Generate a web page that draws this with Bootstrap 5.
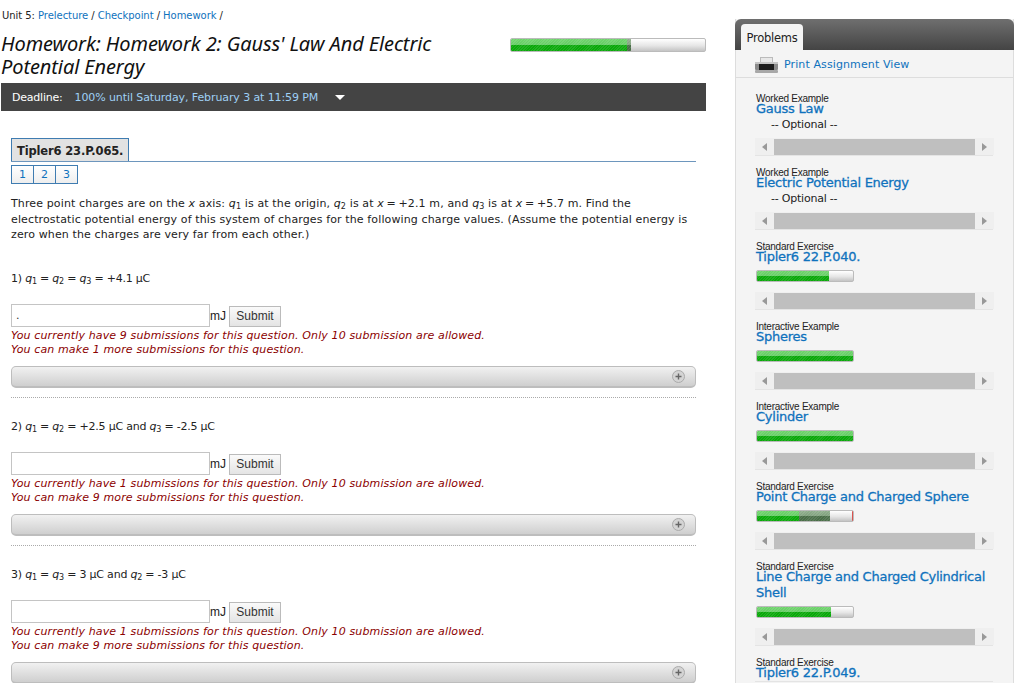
<!DOCTYPE html>
<html lang="en">
<head>
  <meta charset="UTF-8" />
  <meta name="viewport" content="width=device-width, initial-scale=1.0" />
  <title>Homework 2</title>
  <link href="https://cdn.jsdelivr.net/npm/bootstrap@5.3.3/dist/css/bootstrap.min.css" rel="stylesheet">
  <style>
    html, body { height: 683px; overflow: hidden; }
    body { font-family: "DejaVu Sans", sans-serif; font-size: 11px; line-height: 15.5px; color: #222; background: #fff; letter-spacing: -.02em; }
    a { color: #0f72bd; text-decoration: none; }
    .page-wrap { width: 1024px; }
    .main-col { width: 706px; flex: none; }
    .crumbs { font-size: 10px; line-height: 14px; padding: 9px 0 0 2px; letter-spacing: -.05px; }
    .head-row { padding-top: 10px; }
    .hw-title { width: 460px; font-family: "Noto Sans", sans-serif; font-size: 20px; line-height: 23px; font-style: italic; font-weight: 400; margin: -1px 0 0 1px; color: #111; letter-spacing: -.1px; }
    .meter { height: 14px; border: 1px solid #bbb; border-radius: 2px; background: linear-gradient(#fff, #e6e6e6 55%, #c4c4c4); overflow: hidden; }
    .meter-big { width: 196px; margin: 5px 0 0 0; }
    .meter-small { width: 98px; margin-left: 1px; height: 12px; position: relative; }
    .fill, .fill-dark { height: 100%; float: left; }
    .fill { background: repeating-linear-gradient(135deg, rgba(255,255,255,.1) 0 1px, transparent 1px 2px), linear-gradient(#6fd46c 0, #66cc66 50%, #0aa80a 50%, #0aa80a 100%); }
    .fill-dark { background: repeating-linear-gradient(135deg, rgba(255,255,255,.1) 0 1px, transparent 1px 2px), linear-gradient(#8fae8c 0, #80a07d 50%, #4a6e48 50%, #4a6e48 100%); }
    .red-tick { position: absolute; right: 0; top: 0; bottom: 0; width: 1px; background: #d9534f; }
    .deadline { background: #444; color: #fff; height: 28px; margin: 5px 0 0 1px; padding: 1px 0 0 11px; gap: 12px; }
    .deadline a { color: #9fd0f5; letter-spacing: -.1px; }
    .caret-down { width: 0; height: 0; border-left: 5px solid transparent; border-right: 5px solid transparent; border-top: 5px solid #fff; margin-left: 5px; }
    .body-wrap { padding: 27px 10px 0 11px; }
    .prob-tab { display: inline-block; height: 23px; padding: 0 5px; border: 1px solid #3f7cb1; border-bottom: 0; background: #e2e2e2; color: #222; font-size: 11.5px; font-weight: 700; line-height: 24px; vertical-align: bottom; letter-spacing: -.15px; }
    .prob-rule { border-bottom: 1px solid #6d96bd; height: 24px; }
    .part-tabs { margin-top: 3px; margin-bottom: 12px; }
    .part-tabs a { width: 23px; height: 19px; text-align: center; line-height: 17px; border: 1px solid #3f7cb1; margin-right: -1px; background: linear-gradient(#fff, #eee); }
    .qtext { margin: 0; letter-spacing: .126px; }
    .eq-tight { margin: 0 -1px; }
    sub { font-size: 8px; bottom: -.3em; }
    .question { padding-top: 21px; }
    .question-first { padding-top: 28px; }
    .q-label { margin: 0 0 18px; line-height: 15px; }
    .q-line { height: 23px; }
    .answer-box { width: 199px; height: 23px; border: 1px solid #c4c4c4; background: #fff; padding: 0 4px; font-size: 11px; color: #333; line-height: 21px; }
    .unit { font-family: "Liberation Sans", sans-serif; font-size: 12px; margin-top: 5px; letter-spacing: 0; }
    .sub-btn { font-family: "Liberation Sans", sans-serif; font-size: 12px; letter-spacing: 0; color: #333; height: 21px; width: 52px; margin: 2px 0 0 3px; padding: 0; border: 1px solid #bbb; border-radius: 0; background: linear-gradient(#fafafa, #e4e4e4); line-height: 19px; }
    .warn { color: #8b0000; font-style: italic; line-height: 14px; margin-top: 2px; letter-spacing: .13px; }
    .hint-bar { height: 22px; margin-top: 9px; border: 1px solid #bdbdbd; border-bottom-width: 2px; border-radius: 5px; background: linear-gradient(#f1f1f1, #cfcfcf); padding-right: 10px; }
    .hint-plus { width: 13px; height: 13px; }
    .q-sep { border-bottom: 1px dotted #aaa; margin-top: 9px; height: 0; }
    .side-col { width: 279px; flex: none; margin: 19px 0 0 29px; background: #f4f4f4; border-left: 1px solid #ddd; border-right: 1px solid #ddd; height: 700px; }
    .side-head { height: 31px; margin: 0 -1px; background: linear-gradient(#6f6f6f, #444); border-radius: 6px 6px 0 0; padding: 5px 0 0 6px; }
    .side-tab { display: block; width: 62px; height: 26px; background: #f4f4f4; border-radius: 4px 4px 0 0; color: #222; text-align: center; line-height: 28px; font-size: 11.5px; }
    .print-row { height: 28px; border-bottom: 1px solid #ddd; padding: 2px 0 0 19px; gap: 6px; }
    .print-row a { font-size: 11px; letter-spacing: .01em; }
    .side-list { padding: 15px 20px 0 19px; }
    .side-item { border-bottom: 1px solid #e4e4e4; margin-bottom: 11px; }
    .kind { font-family: "Liberation Sans", sans-serif; font-size: 10px; line-height: 12px; color: #222; letter-spacing: -.25px; margin-left: 1px; }
    .item-link { display: block; font-size: 13px; line-height: 16px; font-weight: 400; -webkit-text-stroke: .3px #0f72bd; letter-spacing: -.25px; margin: -4px 0 0 1px; }
    .optional { padding-left: 16px; line-height: 14px; margin-top: 1px; }
    .fake-scroll { height: 17px; width: 239px; background: #efefef; margin-top: 6px; padding: 0 7px; justify-content: space-between; }
    .fake-scroll span { flex: 1; height: 16px; background: #bfbfbf; margin: 0 7px; }
    .arrow-l { width: 0; height: 0; border-top: 4px solid transparent; border-bottom: 4px solid transparent; border-right: 5px solid #999; }
    .arrow-r { width: 0; height: 0; border-top: 4px solid transparent; border-bottom: 4px solid transparent; border-left: 5px solid #999; }
    .with-meter .meter-small { margin-top: 5px; }
    .with-meter .fake-scroll { margin-top: 10px; }
  </style>
</head>
<body>
  <div class="page-wrap d-flex align-items-start">
    <div class="main-col">
      <div class="crumbs">Unit 5: <a href="#">Prelecture</a> / <a href="#">Checkpoint</a> / <a href="#">Homework</a> /</div>
      <div class="head-row d-flex justify-content-between align-items-start">
        <h1 class="hw-title">Homework: Homework 2: Gauss' Law And Electric Potential Energy</h1>
        <div class="meter meter-big"><div class="fill" style="width: 60%"></div><div class="fill-dark" style="width: 2%"></div></div>
      </div>
      <div class="deadline d-flex align-items-center">
        <span>Deadline:</span>
        <a href="#">100% until Saturday, February 3 at 11:59 PM</a>
        <span class="caret-down"></span>
      </div>

      <div class="body-wrap">
        <div class="prob-rule"><span class="prob-tab">Tipler6 23.P.065.</span></div>
        <div class="part-tabs d-flex">
          <a href="#">1</a><a href="#">2</a><a href="#">3</a>
        </div>
        <p class="qtext">Three point charges are on the <i>x</i> axis: <i>q</i><sub>1</sub> is at the origin, <i>q</i><sub>2</sub> is at <i>x</i> <span class="eq-tight">=</span> +2.1 m, and <i>q</i><sub>3</sub> is at <i>x</i> <span class="eq-tight">=</span> +5.7 m. Find the electrostatic potential energy of this system of charges for the following charge values. (Assume the potential energy is zero when the charges are very far from each other.)</p>

        <div class="question question-first">
          <p class="q-label">1) <i>q</i><sub>1</sub> = <i>q</i><sub>2</sub> = <i>q</i><sub>3</sub> = +4.1 μC</p>
          <div class="q-line d-flex"><div class="answer-box">.</div><span class="unit">mJ</span><button type="button" class="btn sub-btn">Submit</button></div>
          <div class="warn">You currently have 9 submissions for this question. Only 10 submission are allowed.<br>You can make 1 more submissions for this question.</div>
          <div class="hint-bar d-flex align-items-center justify-content-end">
            <svg class="hint-plus" viewBox="0 0 13 13"><circle cx="6.5" cy="6.5" r="6" fill="#d4d4d4" stroke="#aaa"/><path d="M3.5 6.5h6M6.5 3.5v6" stroke="#666" stroke-width="1.4"/></svg>
          </div>
          <div class="q-sep"></div>
        </div>

        <div class="question">
          <p class="q-label">2) <i>q</i><sub>1</sub> = <i>q</i><sub>2</sub> = +2.5 μC and <i>q</i><sub>3</sub> = -2.5 μC</p>
          <div class="q-line d-flex"><div class="answer-box"></div><span class="unit">mJ</span><button type="button" class="btn sub-btn">Submit</button></div>
          <div class="warn">You currently have 1 submissions for this question. Only 10 submission are allowed.<br>You can make 9 more submissions for this question.</div>
          <div class="hint-bar d-flex align-items-center justify-content-end">
            <svg class="hint-plus" viewBox="0 0 13 13"><circle cx="6.5" cy="6.5" r="6" fill="#d4d4d4" stroke="#aaa"/><path d="M3.5 6.5h6M6.5 3.5v6" stroke="#666" stroke-width="1.4"/></svg>
          </div>
          <div class="q-sep"></div>
        </div>

        <div class="question">
          <p class="q-label">3) <i>q</i><sub>1</sub> = <i>q</i><sub>3</sub> = 3 μC and <i>q</i><sub>2</sub> = -3 μC</p>
          <div class="q-line d-flex"><div class="answer-box"></div><span class="unit">mJ</span><button type="button" class="btn sub-btn">Submit</button></div>
          <div class="warn">You currently have 1 submissions for this question. Only 10 submission are allowed.<br>You can make 9 more submissions for this question.</div>
          <div class="hint-bar d-flex align-items-center justify-content-end">
            <svg class="hint-plus" viewBox="0 0 13 13"><circle cx="6.5" cy="6.5" r="6" fill="#d4d4d4" stroke="#aaa"/><path d="M3.5 6.5h6M6.5 3.5v6" stroke="#666" stroke-width="1.4"/></svg>
          </div>
        </div>
      </div>
    </div>

    <div class="side-col">
      <div class="side-head"><a class="side-tab" href="#">Problems</a></div>
      <div class="print-row d-flex align-items-center">
        <svg width="23" height="16" viewBox="0 0 23 16"><rect x="5.5" y="0.5" width="12" height="5" fill="#e8e8e8" stroke="#bbb"/><rect x="0" y="5" width="23" height="8" rx="1" fill="#8a8a8a"/><rect x="0" y="5" width="23" height="2" fill="#c4c4c4"/><rect x="4" y="7" width="15" height="6" fill="#1c1c1c"/><rect x="0" y="13" width="23" height="3" rx="1" fill="#a8a8a8"/></svg>
        <a href="#">Print Assignment View</a>
      </div>
      <div class="side-list">
        <div class="side-item">
          <div class="kind">Worked Example</div>
          <a class="item-link" href="#">Gauss Law</a>
          <div class="optional">-- Optional --</div>
          <div class="fake-scroll d-flex align-items-center"><i class="arrow-l"></i><span></span><i class="arrow-r"></i></div>
        </div>
        <div class="side-item">
          <div class="kind">Worked Example</div>
          <a class="item-link" href="#">Electric Potential Energy</a>
          <div class="optional">-- Optional --</div>
          <div class="fake-scroll d-flex align-items-center"><i class="arrow-l"></i><span></span><i class="arrow-r"></i></div>
        </div>
        <div class="side-item with-meter">
          <div class="kind">Standard Exercise</div>
          <a class="item-link" href="#">Tipler6 22.P.040.</a>
          <div class="meter meter-small"><div class="fill" style="width: 75%"></div></div>
          <div class="fake-scroll d-flex align-items-center"><i class="arrow-l"></i><span></span><i class="arrow-r"></i></div>
        </div>
        <div class="side-item with-meter">
          <div class="kind">Interactive Example</div>
          <a class="item-link" href="#">Spheres</a>
          <div class="meter meter-small"><div class="fill" style="width: 100%"></div></div>
          <div class="fake-scroll d-flex align-items-center"><i class="arrow-l"></i><span></span><i class="arrow-r"></i></div>
        </div>
        <div class="side-item with-meter">
          <div class="kind">Interactive Example</div>
          <a class="item-link" href="#">Cylinder</a>
          <div class="meter meter-small"><div class="fill" style="width: 100%"></div></div>
          <div class="fake-scroll d-flex align-items-center"><i class="arrow-l"></i><span></span><i class="arrow-r"></i></div>
        </div>
        <div class="side-item with-meter">
          <div class="kind">Standard Exercise</div>
          <a class="item-link" href="#">Point Charge and Charged Sphere</a>
          <div class="meter meter-small"><div class="fill" style="width: 44%"></div><div class="fill-dark" style="width: 32%"></div><span class="red-tick"></span></div>
          <div class="fake-scroll d-flex align-items-center"><i class="arrow-l"></i><span></span><i class="arrow-r"></i></div>
        </div>
        <div class="side-item with-meter">
          <div class="kind">Standard Exercise</div>
          <a class="item-link" href="#">Line Charge and Charged Cylindrical Shell</a>
          <div class="meter meter-small"><div class="fill" style="width: 77%"></div></div>
          <div class="fake-scroll d-flex align-items-center"><i class="arrow-l"></i><span></span><i class="arrow-r"></i></div>
        </div>
        <div class="side-item with-meter">
          <div class="kind">Standard Exercise</div>
          <a class="item-link" href="#">Tipler6 22.P.049.</a>
        </div>
      </div>
    </div>
  </div>
  <script src="https://cdn.jsdelivr.net/npm/bootstrap@5.3.3/dist/js/bootstrap.bundle.min.js"></script>
</body>
</html>
